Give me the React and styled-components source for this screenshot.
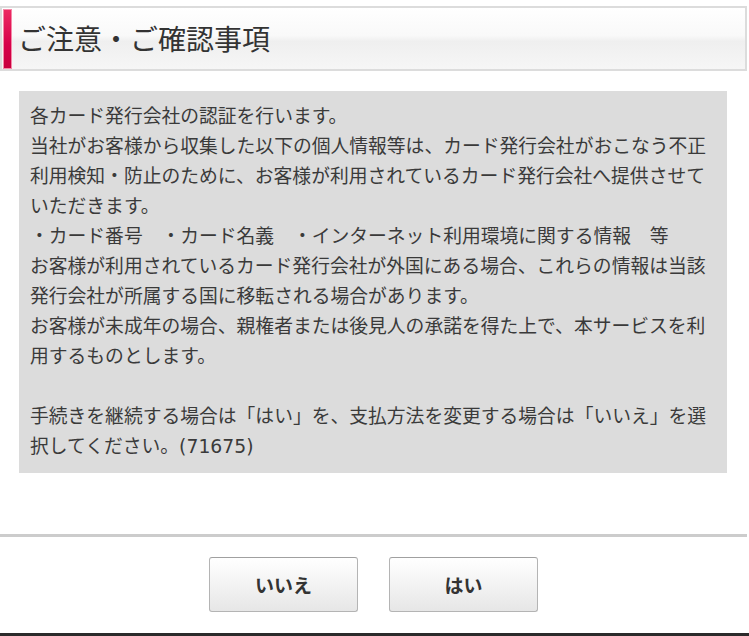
import React from "react";
import styled, { createGlobalStyle } from "styled-components";

const GlobalStyle = createGlobalStyle`
  html, body {
    margin: 0;
    padding: 0;
    background: #fff;
    overflow: hidden;
  }
  body {
    font-family: "DejaVu Sans", "Noto Sans CJK JP", sans-serif;
    color: #333;
  }
`;

const notes = [
  "各カード発行会社の認証を行います。",
  "当社がお客様から収集した以下の個人情報等は、カード発行会社がおこなう不正利用検知・防止のために、お客様が利用されているカード発行会社へ提供させていただきます。",
  "・カード番号　・カード名義　・インターネット利用環境に関する情報　等",
  "お客様が利用されているカード発行会社が外国にある場合、これらの情報は当該発行会社が所属する国に移転される場合があります。",
  "お客様が未成年の場合、親権者または後見人の承諾を得た上で、本サービスを利用するものとします。",
  "",
  "手続きを継続する場合は「はい」を、支払方法を変更する場合は「いいえ」を選択してください。(71675)",
];

const App = () => {
  return (
    <>
      <GlobalStyle />
      <SPage>
        <SHeader>
          <SAccent />
          <STitle>ご注意・ご確認事項</STitle>
        </SHeader>
        <SNoticeBox>
          {notes.map((line, i) =>
            line ? <SLine key={i}>{line}</SLine> : <SBlank key={i} />
          )}
        </SNoticeBox>
        <SActions>
          <SButton type="button">いいえ</SButton>
          <SButton type="button">はい</SButton>
        </SActions>
      </SPage>
      <SFooter />
    </>
  );
};

export default App;

const SPage = styled.div`
  width: 747px;
  padding-top: 6px;
`;

const SHeader = styled.div`
  display: flex;
  align-items: center;
  height: 61px;
  border: 2px solid #dcdcdc;
  background: linear-gradient(
    to bottom,
    #ffffff 0%,
    #f9f9f9 45%,
    #efefef 55%,
    #f6f6f6 100%
  );
`;

const SAccent = styled.div`
  align-self: stretch;
  width: 7px;
  margin: 1px 0 0 1px;
  border: 1px solid #f58aa8;
  background: linear-gradient(to bottom, #ec2a63 0%, #d6004a 60%, #c8003e 100%);
`;

const STitle = styled.h1`
  margin: 0 0 0 6px;
  font-family: "Noto Sans CJK JP", sans-serif;
  font-size: 28px;
  font-weight: normal;
  line-height: 1;
  color: #333;
  padding-bottom: 2px;
`;

const SNoticeBox = styled.div`
  margin: 20px 20px 0 19px;
  padding: 11px;
  background: #dcdcdc;
  font-size: 18.8px;
  line-height: 30px;
  color: #3a3a3a;
`;

const SLine = styled.p`
  margin: 0;
`;

const SBlank = styled.div`
  height: 30px;
`;

const SActions = styled.div`
  display: flex;
  justify-content: center;
  gap: 31px;
  margin-top: 61px;
  padding: 20px 0 21px 0;
  border-top: 3px solid #cccccc;
`;

const SButton = styled.button`
  width: 149px;
  height: 55px;
  border: 1px solid #b4b4b4;
  border-top-color: #a0a0a0;
  border-radius: 3px;
  background: linear-gradient(to bottom, #ffffff 0%, #f3f3f3 50%, #e6e6e6 100%);
  font-family: "Noto Sans CJK JP", sans-serif;
  font-size: 19px;
  font-weight: bold;
  color: #333;
  cursor: pointer;
`;

const SFooter = styled.div`
  height: 40px;
  background: #2b2b2b;
`;
